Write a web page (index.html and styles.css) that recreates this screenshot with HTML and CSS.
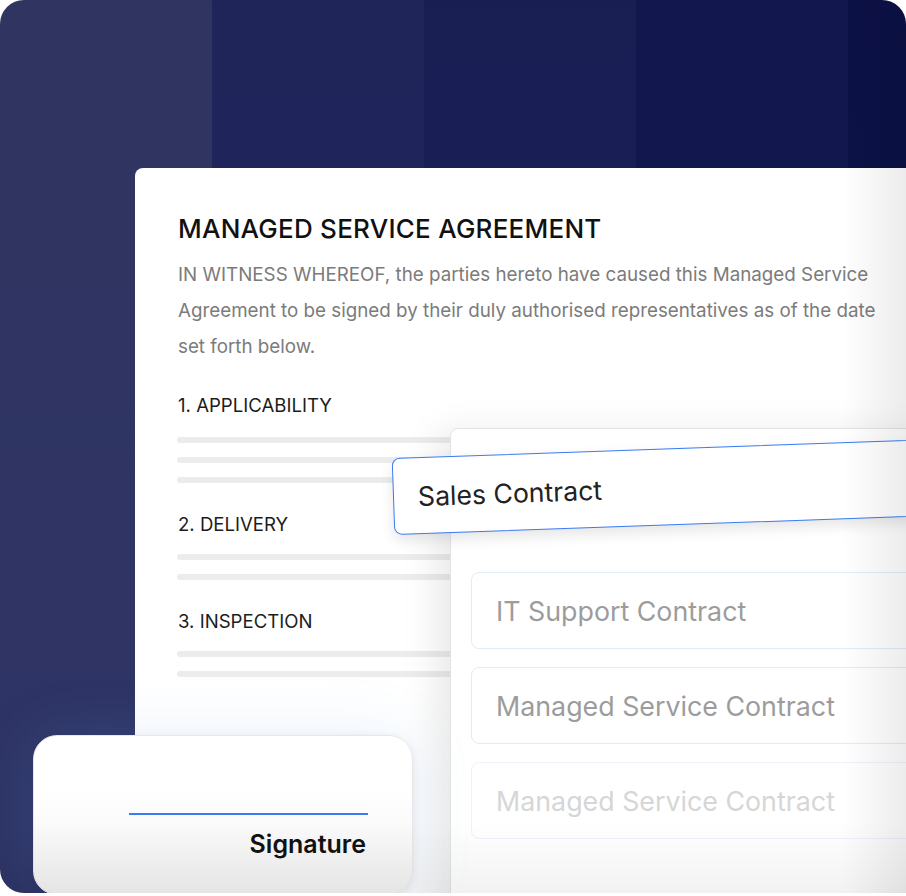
FILE: index.html
```html
<!DOCTYPE html>
<html lang="en">
<head>
<meta charset="utf-8">
<title>Managed Service Agreement</title>
<link rel="stylesheet" href="styles.css">
</head>
<body>
<div class="stage">
  <div class="doc">
    <h1 class="doc-title">MANAGED SERVICE AGREEMENT</h1>
    <p class="doc-intro">IN WITNESS WHEREOF, the parties hereto have caused this Managed Service<br>Agreement to be signed by their duly authorised representatives as of the date<br>set forth below.</p>
    <section class="clause">
      <h2 class="clause-title">1. APPLICABILITY</h2>
      <div class="bars"><span class="bar"></span><span class="bar"></span><span class="bar"></span></div>
    </section>
    <section class="clause">
      <h2 class="clause-title">2. DELIVERY</h2>
      <div class="bars"><span class="bar"></span><span class="bar"></span></div>
    </section>
    <section class="clause">
      <h2 class="clause-title">3. INSPECTION</h2>
      <div class="bars"><span class="bar"></span><span class="bar"></span></div>
    </section>

    <div class="picker">
      <div class="picker-selected">Sales Contract</div>
      <ul class="picker-list">
        <li class="picker-item">IT Support Contract</li>
        <li class="picker-item">Managed Service Contract</li>
        <li class="picker-item picker-item--faded">Managed Service Contract</li>
      </ul>
    </div>
  </div>

  <div class="signature-card">
    <div class="signature-line"></div>
    <div class="signature-label">Signature</div>
  </div>
  <div class="vignette"></div>
</div>
</body>
</html>
```

FILE: styles.css
```css
* { box-sizing: border-box; }

html, body {
  margin: 0;
  padding: 0;
  background: #ffffff;
}

body {
  font-family: "Inter", "Noto Sans", "Liberation Sans", sans-serif;
  width: 906px;
  height: 896px;
  overflow: hidden;
}

.stage {
  position: relative;
  width: 906px;
  height: 893px;
  padding: 168px 0 0 135px;
  border-radius: 24px 24px 0 24px;
  overflow: hidden;
  background:
    linear-gradient(180deg, rgba(255,255,255,0.02) 0, rgba(60,100,210,0.07) 100%),
    linear-gradient(90deg,
      #2c305d 0, #2c305d 212px,
      #1b2156 212px, #1b2156 424px,
      #141a4f 424px, #141a4f 636px,
      #0d1349 636px, #0d1349 848px,
      #070c42 848px);
}

/* document card */
.doc {
  position: relative;
  height: 100%;
  background: #ffffff;
  border-radius: 8px 0 0 0;
  padding: 46px 0 0 43px;
}

.doc-title {
  margin: 0;
  font-size: 26px;
  line-height: 30px;
  font-weight: 500;
  color: #111111;
  letter-spacing: 0.25px;
}

.doc-intro {
  margin: 13px 0 0;
  font-size: 18.8px;
  line-height: 36px;
  color: #7b7b7b;
  white-space: nowrap;
}

.clause {
  margin-top: 28px;
}

.clause-title {
  margin: 0;
  font-size: 18.6px;
  line-height: 24px;
  font-weight: 400;
  color: #1c1c1c;
}

.bars {
  display: flex;
  flex-direction: column;
  gap: 14px;
  margin-top: 20px;
  width: 520px;
  margin-left: -1px;
}

.clause + .clause { margin-top: 29px; }
.clause + .clause .bars { margin-top: 18px; }

.bar {
  display: block;
  height: 6px;
  border-radius: 3px;
  background: #ececec;
}

/* dropdown */
.picker {
  position: absolute;
  left: 315px;
  top: 260px;
  right: -30px;
  bottom: -30px;
  background: #ffffff;
  border: 1px solid #e3e3e3;
  border-radius: 8px;
  box-shadow: -14px 4px 36px rgba(0, 0, 0, 0.09);
  padding: 143px 0 0 20px;
}

.picker-selected {
  position: absolute;
  left: -58px;
  top: 29px;
  width: 640px;
  height: 77px;
  display: flex;
  align-items: center;
  padding-left: 24px;
  background: #ffffff;
  border: 1.5px solid #3a7af3;
  border-radius: 8px;
  font-size: 26.6px;
  color: #222222;
  transform-origin: left center;
  transform: rotate(-2deg);
  box-shadow: 0 6px 14px rgba(0, 0, 0, 0.10);
}

.picker-list {
  list-style: none;
  margin: 0;
  padding: 0;
  display: flex;
  flex-direction: column;
  gap: 18px;
}

.picker-item {
  height: 77px;
  display: flex;
  align-items: center;
  padding-left: 24px;
  border: 1.5px solid #e3eafa;
  border-radius: 8px;
  font-size: 26.8px;
  color: #9c9c9c;
}

.picker-item--faded {
  color: #d6d6d6;
  border-color: #eef2fb;
}

/* signature card */
.signature-card {
  position: absolute;
  left: 33px;
  top: 735px;
  width: 380px;
  height: 160px;
  border-radius: 24px;
  border: 1px solid #e8e8e8;
  background: linear-gradient(180deg, #ffffff 35%, #f1f1f1 100%);
  box-shadow: 0 0 60px rgba(110, 165, 235, 0.16), 0 2px 8px rgba(0, 0, 0, 0.08);
  padding: 77px 44px 0 95px;
  display: flex;
  flex-direction: column;
  align-items: flex-end;
}

.signature-line {
  width: 239px;
  height: 2px;
  background: #3a7af3;
}

.signature-label {
  margin-top: 14px;
  font-size: 25px;
  line-height: 30px;
  font-weight: 600;
  color: #111111;
  margin-right: 2px;
}

.vignette {
  position: absolute;
  inset: 0;
  pointer-events: none;
  background:
    linear-gradient(90deg, rgba(0,0,0,0) 93%, rgba(0,0,0,0.075) 100%),
    linear-gradient(180deg, rgba(0,0,0,0) 92%, rgba(0,0,0,0.05) 100%);
}
```
